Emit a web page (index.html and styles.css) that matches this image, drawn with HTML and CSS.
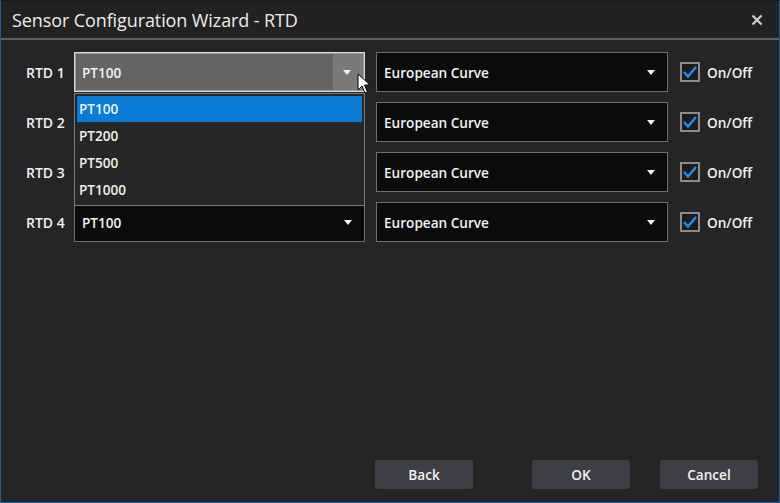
FILE: index.html
```html
<!DOCTYPE html>
<html>
<head>
<meta charset="utf-8">
<link rel="stylesheet" href="styles.css">
</head>
<body>
<div class="window">
  <div class="titlebar">
    <span class="title">Sensor Configuration Wizard - RTD</span>
    <svg class="close" width="12" height="12" viewBox="0 0 12 12"><path d="M1.5 1.5 L10.5 10.5 M10.5 1.5 L1.5 10.5" stroke="#d0d0d0" stroke-width="2.2" fill="none"/></svg>
  </div>
  <div class="content">
    <div class="rows">
      <div class="row">
        <span class="label">RTD 1</span>
        <div class="combo combo-active">
          <span class="value">PT100</span>
          <span class="arrowbox"><svg width="8" height="5" viewBox="0 0 8 5"><path d="M0 0 L8 0 L4 5 Z" fill="#f0f0f0"/></svg></span>
          <div class="popup">
            <div class="item item-selected">PT100</div>
            <div class="item">PT200</div>
            <div class="item">PT500</div>
            <div class="item">PT1000</div>
          </div>
          <svg class="cursor" width="14" height="22" viewBox="0 0 14 22"><path d="M1 1 L1 17 L5 13 L8 20 L10.5 19 L7.5 12 L13 12 Z" fill="#ffffff" stroke="#000000" stroke-width="1" stroke-linejoin="miter"/></svg>
        </div>
        <div class="combo">
          <span class="value">European Curve</span>
          <span class="arrowbox"><svg width="8" height="5" viewBox="0 0 8 5"><path d="M0 0 L8 0 L4 5 Z" fill="#f0f0f0"/></svg></span>
        </div>
        <span class="check"><svg width="16" height="14" viewBox="0 0 16 14"><path d="M2 7 L6 11.5 L14 2" stroke="#1e8fff" stroke-width="2.4" fill="none"/></svg></span>
        <span class="onoff">On/Off</span>
      </div>
      <div class="row">
        <span class="label">RTD 2</span>
        <div class="combo"></div>
        <div class="combo">
          <span class="value">European Curve</span>
          <span class="arrowbox"><svg width="8" height="5" viewBox="0 0 8 5"><path d="M0 0 L8 0 L4 5 Z" fill="#f0f0f0"/></svg></span>
        </div>
        <span class="check"><svg width="16" height="14" viewBox="0 0 16 14"><path d="M2 7 L6 11.5 L14 2" stroke="#1e8fff" stroke-width="2.4" fill="none"/></svg></span>
        <span class="onoff">On/Off</span>
      </div>
      <div class="row">
        <span class="label">RTD 3</span>
        <div class="combo"></div>
        <div class="combo">
          <span class="value">European Curve</span>
          <span class="arrowbox"><svg width="8" height="5" viewBox="0 0 8 5"><path d="M0 0 L8 0 L4 5 Z" fill="#f0f0f0"/></svg></span>
        </div>
        <span class="check"><svg width="16" height="14" viewBox="0 0 16 14"><path d="M2 7 L6 11.5 L14 2" stroke="#1e8fff" stroke-width="2.4" fill="none"/></svg></span>
        <span class="onoff">On/Off</span>
      </div>
      <div class="row">
        <span class="label">RTD 4</span>
        <div class="combo">
          <span class="value">PT100</span>
          <span class="arrowbox"><svg width="8" height="5" viewBox="0 0 8 5"><path d="M0 0 L8 0 L4 5 Z" fill="#f0f0f0"/></svg></span>
        </div>
        <div class="combo">
          <span class="value">European Curve</span>
          <span class="arrowbox"><svg width="8" height="5" viewBox="0 0 8 5"><path d="M0 0 L8 0 L4 5 Z" fill="#f0f0f0"/></svg></span>
        </div>
        <span class="check"><svg width="16" height="14" viewBox="0 0 16 14"><path d="M2 7 L6 11.5 L14 2" stroke="#1e8fff" stroke-width="2.4" fill="none"/></svg></span>
        <span class="onoff">On/Off</span>
      </div>
    </div>
    <div class="buttons">
      <button class="btn">Back</button>
      <button class="btn btn-ok">OK</button>
      <button class="btn">Cancel</button>
    </div>
  </div>
</div>
</body>
</html>
```
FILE: styles.css
```css
* { box-sizing: border-box; }
html, body { margin: 0; padding: 0; background: #252525; }
body { font-family: "Open Sans", "Noto Sans", sans-serif; color: #f2f2f2; }
.window {
  width: 780px; height: 503px;
  border: 1px solid #1d5e94;
  border-top-color: #1c1c1c;
  background: #252525;
  display: flex; flex-direction: column;
}
.titlebar {
  height: 39px;
  background: #222222;
  border-bottom: 2px solid #5e5e5e;
  display: flex; align-items: center; justify-content: space-between;
  padding: 0 16px 0 11px;
  flex: none;
}
.title { font-size: 18px; color: #ececec; letter-spacing: -0.1px; }
.close { margin-top: 1px; }
.content {
  flex: 1;
  display: flex; flex-direction: column; justify-content: space-between;
  padding: 12px 21px 13px 25px;
}
.rows { display: flex; flex-direction: column; gap: 10px; }
.row { display: flex; align-items: center; height: 40px; }
.label { width: 48px; font-size: 14px; font-weight: 600; color: #f0f0f0; }
.combo {
  position: relative;
  width: 291px; height: 40px;
  background: #0b0b0b;
  border: 1px solid #707070;
  display: flex; align-items: center; justify-content: space-between;
  padding-left: 7px;
  font-size: 13.6px; font-weight: 600;
}
.combo + .combo { margin-left: 11px; width: 292px; }
.arrowbox {
  width: 30px; align-self: stretch;
  display: flex; align-items: center; justify-content: center;
  padding-right: 2px;
}
.combo-active {
  background: #646464;
  border: 1px solid #dcdcdc;
  box-shadow: inset 0 0 0 1px #9a9a9a;
}
.combo-active .arrowbox { background: #7a7a7a; margin: 1px 1px 1px 0; }
.popup {
  position: absolute; left: -1px; top: 40px;
  width: 291px; height: 113px;
  background: #262626;
  border: 1px solid #7a7a7a;
  padding: 2px 2px 0 2px;
  z-index: 2;
}
.item { height: 27px; line-height: 27px; padding-left: 2px; font-size: 13.6px; font-weight: 600; color: #f0f0f0; }
.item-selected { background: #0a7cd6; height: 26px; line-height: 26px; }
.cursor { position: absolute; right: -7px; top: 20px; z-index: 3; }
.check {
  width: 20px; height: 20px; margin-left: 12px;
  border: 2px solid #8c8c8c; background: #1c1c1c;
  display: flex; align-items: center; justify-content: center;
}
.onoff { margin-left: 7px; font-size: 13.6px; font-weight: 600; color: #f0f0f0; }
.buttons { display: flex; justify-content: flex-end; }
.btn {
  width: 98px; height: 29px;
  background: #3e3e46; color: #f2f2f2;
  border: none; border-radius: 3px;
  font-family: "Open Sans", "Noto Sans", sans-serif;
  font-size: 13.6px; font-weight: 600;
  padding: 0;
}
.btn-ok { margin-left: 59px; }
.btn + .btn:last-child { margin-left: 30px; }
```
